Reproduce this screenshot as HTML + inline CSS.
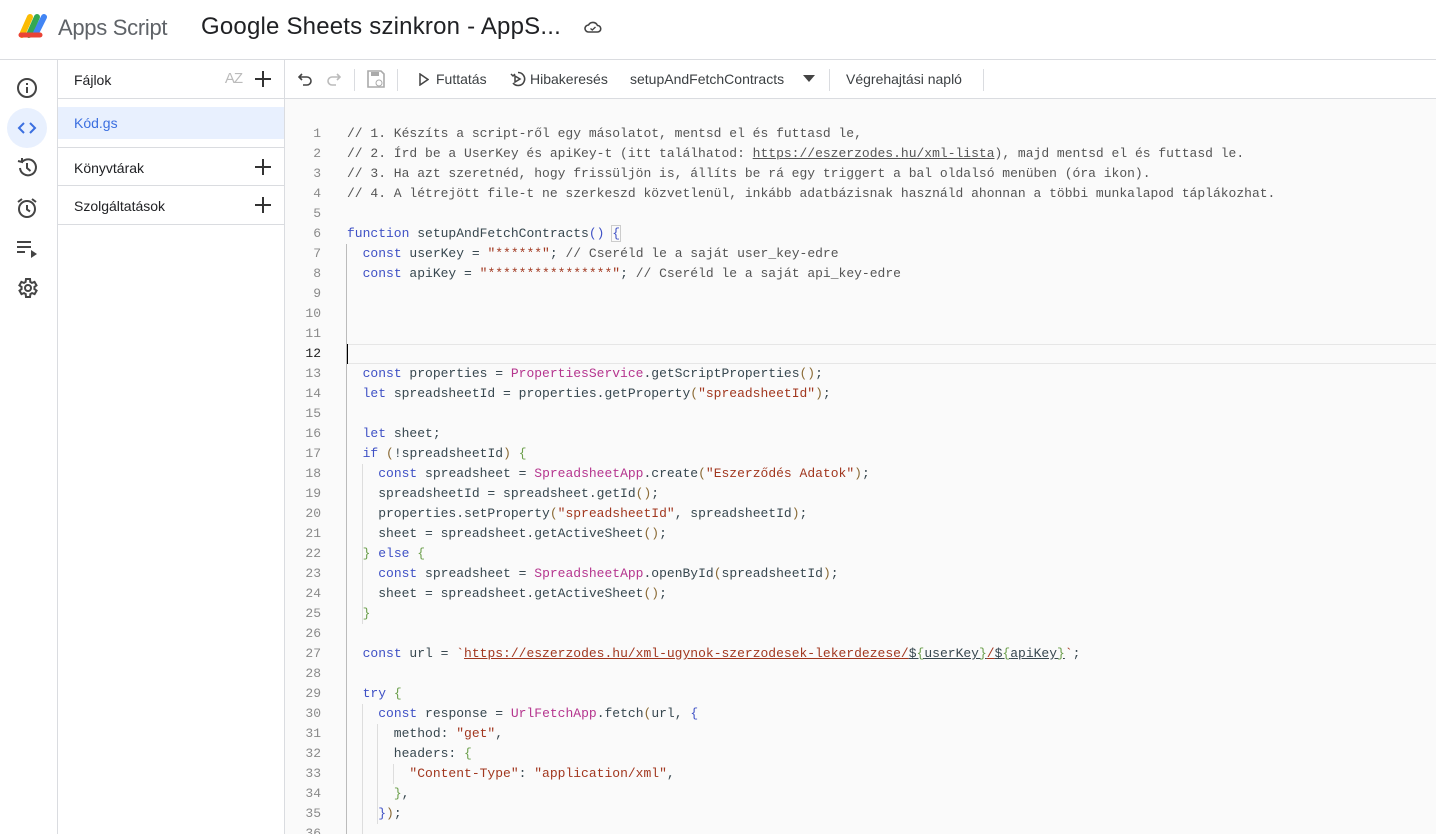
<!DOCTYPE html><html><head><meta charset="utf-8"><style>
*{box-sizing:border-box;margin:0;padding:0}
html,body{width:1436px;height:834px;overflow:hidden}
body{font-family:"Liberation Sans",sans-serif;background:#fff;color:#202124;position:relative}
.top{position:absolute;left:0;top:0;width:1436px;height:60px;border-bottom:1px solid #dadce0}
.rail{position:absolute;left:0;top:60px;width:58px;height:774px;border-right:1px solid #dadce0}
.files{position:absolute;left:58px;top:60px;width:227px;height:774px;border-right:1px solid #dadce0}
.tb{position:absolute;left:285px;top:60px;right:0;height:39px;border-bottom:1px solid #dadce0;font-size:14px;color:#3c4043}
.tb span{position:absolute;top:11px}
.ed{position:absolute;left:285px;top:99px;right:0;bottom:0;background:#fafafa;overflow:hidden}
.ln{position:absolute;left:0;width:36px;text-align:right;font:13px "Liberation Mono",monospace;color:#8a8a8a}
.cl{position:absolute;left:62px;font:13px "Liberation Mono",monospace;color:#37474f;white-space:pre}
.k{color:#3f51c5}.s{color:#a1371f}.c{color:#555}.p{color:#b5358e}.g{color:#6a9e4a}.b{color:#8b6b36}
.u{text-decoration:underline}
.frow{position:absolute;left:0;width:226px;height:39px;border-bottom:1px solid #dadce0;font-size:14px;padding:12px 16px}
.plus{position:absolute;right:12px;top:10px}
.guide{position:absolute;width:1px;background:#ddd}
</style></head><body>
<div class="top">
<svg style="position:absolute;left:18px;top:13px" width="34" height="26" viewBox="0 0 34 26"><path d="M4 22 L12 4" stroke="#fbbc04" stroke-width="6" stroke-linecap="round"/><path d="M11 22 L19 4" stroke="#34a853" stroke-width="6" stroke-linecap="round"/><path d="M18 20 L26 4" stroke="#4285f4" stroke-width="6" stroke-linecap="round"/><path d="M3 22 L22 22" stroke="#ea4335" stroke-width="5" stroke-linecap="round"/></svg>
<div style="position:absolute;left:58px;top:15px;font-size:22px;color:#5f6368;letter-spacing:-0.3px">Apps Script</div>
<div style="position:absolute;left:201px;top:13px;font-size:24px;color:#202124;letter-spacing:0.2px">Google Sheets szinkron - AppS...</div>
<svg style="position:absolute;left:584px;top:19px" width="18" height="16" viewBox="0 0 18 16"><path d="M4.5 13 A3.5 3.5 0 0 1 4.5 6 A5 5 0 0 1 13.5 6.5 A3.2 3.2 0 0 1 13.5 13 Z" fill="none" stroke="#444" stroke-width="1.6"/><path d="M6.5 9.5 L8.3 11 L11.5 8" fill="none" stroke="#444" stroke-width="1.4"/></svg>
</div>
<div class="rail">
<svg style="position:absolute;left:16px;top:17px" width="22" height="22" viewBox="0 0 22 22"><circle cx="11" cy="11" r="9" fill="none" stroke="#444" stroke-width="2"/><path d="M11 10v6M11 6v2" stroke="#444" stroke-width="2"/></svg>
<div style="position:absolute;left:7px;top:48px;width:40px;height:40px;border-radius:20px;background:#e8f0fe"></div>
<svg style="position:absolute;left:16px;top:59px" width="22" height="18" viewBox="0 0 22 18"><path d="M8 4 L3 9 L8 14 M14 4 L19 9 L14 14" fill="none" stroke="#3b6fe0" stroke-width="2"/></svg>
<svg style="position:absolute;left:16px;top:97px" width="22" height="22" viewBox="0 0 22 22"><path d="M4 11 A8 8 0 1 0 6.5 4.5" fill="none" stroke="#444" stroke-width="2"/><path d="M2 4 L6 5 L6 1" fill="none" stroke="#444" stroke-width="2"/><path d="M11 6v5l3.5 3" fill="none" stroke="#444" stroke-width="2"/></svg>
<svg style="position:absolute;left:15px;top:136px" width="24" height="24" viewBox="0 0 24 24"><circle cx="12" cy="13" r="8" fill="none" stroke="#444" stroke-width="2"/><path d="M12 9v4.5l3 2M3 6l4-3M21 6l-4-3" fill="none" stroke="#444" stroke-width="2"/></svg>
<svg style="position:absolute;left:17px;top:180px" width="22" height="18" viewBox="0 0 22 18"><path d="M0 2h14M0 7h14M0 12h8" stroke="#444" stroke-width="2"/><path d="M14 10 L20 14 L14 18Z" fill="#444"/></svg>
<svg style="position:absolute;left:15px;top:216px" width="24" height="24" viewBox="0 0 24 24"><path d="M19.4 13a7.5 7.5 0 0 0 0-2l2.1-1.6-2-3.5-2.5 1a7.5 7.5 0 0 0-1.7-1L15 3h-4l-.4 2.9a7.5 7.5 0 0 0-1.7 1l-2.5-1-2 3.5L6.6 11a7.5 7.5 0 0 0 0 2l-2.1 1.6 2 3.5 2.5-1a7.5 7.5 0 0 0 1.7 1L11 21h4l.4-2.9a7.5 7.5 0 0 0 1.7-1l2.5 1 2-3.5z" fill="none" stroke="#444" stroke-width="2"/><circle cx="13" cy="12" r="3" fill="none" stroke="#444" stroke-width="2"/></svg>
</div>
<div class="files">
<div class="frow" style="top:0">Fájlok<span style="position:absolute;right:42px;top:10px;font-size:15px;color:#bbb;letter-spacing:-1px">AZ</span><svg class="plus" width="18" height="18"><path d="M9 1v16M1 9h16" stroke="#333" stroke-width="2"/></svg></div>
<div style="position:absolute;left:0;top:47px;width:226px;height:32px;background:#e8f0fe;color:#3b6fe0;font-size:14px;padding:8px 16px">Kód.gs</div>
<div class="frow" style="top:87px;border-top:1px solid #dadce0">Könyvtárak<svg class="plus" width="18" height="18"><path d="M9 1v16M1 9h16" stroke="#333" stroke-width="2"/></svg></div>
<div class="frow" style="top:126px">Szolgáltatások<svg class="plus" width="18" height="18"><path d="M9 1v16M1 9h16" stroke="#333" stroke-width="2"/></svg></div>
</div>
<div class="tb">
<svg style="position:absolute;left:13px;top:12px" width="16" height="14" viewBox="0 0 16 14"><path d="M4 2 L1 5 L4 8 M1 5 H9 A4 4 0 0 1 9 13 H5" fill="none" stroke="#444" stroke-width="1.6"/></svg>
<svg style="position:absolute;left:40px;top:12px" width="16" height="14" viewBox="0 0 16 14"><path d="M12 2 L15 5 L12 8 M15 5 H7 A4 4 0 0 0 7 13 H11" fill="none" stroke="#bbb" stroke-width="1.6"/></svg>
<div style="position:absolute;left:69px;top:9px;width:1px;height:22px;background:#dadce0"></div>
<svg style="position:absolute;left:81px;top:9px" width="20" height="20" viewBox="0 0 20 20"><path d="M2 2h13l3 3v13H2z" fill="none" stroke="#aaa" stroke-width="1.6"/><rect x="5" y="3" width="8" height="4" fill="#aaa"/><circle cx="13" cy="14" r="3" fill="#fff" stroke="#aaa"/></svg>
<div style="position:absolute;left:112px;top:9px;width:1px;height:22px;background:#dadce0"></div>
<svg style="position:absolute;left:134px;top:13px" width="10" height="13" viewBox="0 0 10 13"><path d="M1 1 L9 6.5 L1 12Z" fill="none" stroke="#444" stroke-width="1.5"/></svg>
<span style="left:151px">Futtatás</span>
<svg style="position:absolute;left:225px;top:11px" width="16" height="16" viewBox="0 0 16 16"><path d="M8 1.5 A6.5 6.5 0 1 1 3 12" fill="none" stroke="#444" stroke-width="1.6"/><path d="M1 3l2 2 2-2M5 5l5 3-5 3z" fill="none" stroke="#444" stroke-width="1.5"/></svg>
<span style="left:245px">Hibakeresés</span>
<span style="left:345px">setupAndFetchContracts</span>
<svg style="position:absolute;left:518px;top:15px" width="12" height="8"><path d="M0 0h12L6 7z" fill="#444"/></svg>
<div style="position:absolute;left:544px;top:9px;width:1px;height:22px;background:#dadce0"></div>
<span style="left:561px">Végrehajtási napló</span>
<div style="position:absolute;left:698px;top:9px;width:1px;height:22px;background:#dadce0"></div>
</div>
<div class="ed" id="ed">
<div style="position:absolute;left:61px;top:245px;right:0;height:20px;border-top:1px solid #e6e6e6;border-bottom:1px solid #e6e6e6"></div>
<div style="position:absolute;left:61px;top:245px;width:2px;height:20px;background:#000"></div>
<div class="guide" style="left:61px;top:145px;height:700px;background:#bbb"></div>
<div class="guide" style="left:77px;top:365px;height:160px"></div>
<div class="guide" style="left:77px;top:605px;height:140px"></div>
<div class="guide" style="left:92px;top:625px;height:100px"></div>
<div class="guide" style="left:108px;top:665px;height:20px"></div>
</div>
<script>
var L=[
'<span class="c">// 1. Készíts a script-ről egy másolatot, mentsd el és futtasd le,</span>',
'<span class="c">// 2. Írd be a UserKey és apiKey-t (itt találhatod: <span class="u">https://eszerzodes.hu/xml-lista</span>), majd mentsd el és futtasd le.</span>',
'<span class="c">// 3. Ha azt szeretnéd, hogy frissüljön is, állíts be rá egy triggert a bal oldalsó menüben (óra ikon).</span>',
'<span class="c">// 4. A létrejött file-t ne szerkeszd közvetlenül, inkább adatbázisnak használd ahonnan a többi munkalapod táplákozhat.</span>',
'',
'<span class="k">function</span> setupAndFetchContracts<span class="k">()</span> <span class="k" style="outline:1px solid #ccc">{</span>',
'  <span class="k">const</span> userKey = <span class="s">"******"</span>; <span class="c">// Cseréld le a saját user_key-edre</span>',
'  <span class="k">const</span> apiKey = <span class="s">"****************"</span>; <span class="c">// Cseréld le a saját api_key-edre</span>',
'','','','',
'  <span class="k">const</span> properties = <span class="p">PropertiesService</span>.getScriptProperties<span class="b">()</span>;',
'  <span class="k">let</span> spreadsheetId = properties.getProperty<span class="b">(</span><span class="s">"spreadsheetId"</span><span class="b">)</span>;',
'',
'  <span class="k">let</span> sheet;',
'  <span class="k">if</span> <span class="b">(</span>!spreadsheetId<span class="b">)</span> <span class="g">{</span>',
'    <span class="k">const</span> spreadsheet = <span class="p">SpreadsheetApp</span>.create<span class="b">(</span><span class="s">"Eszerződés Adatok"</span><span class="b">)</span>;',
'    spreadsheetId = spreadsheet.getId<span class="b">()</span>;',
'    properties.setProperty<span class="b">(</span><span class="s">"spreadsheetId"</span>, spreadsheetId<span class="b">)</span>;',
'    sheet = spreadsheet.getActiveSheet<span class="b">()</span>;',
'  <span class="g">}</span> <span class="k">else</span> <span class="g">{</span>',
'    <span class="k">const</span> spreadsheet = <span class="p">SpreadsheetApp</span>.openById<span class="b">(</span>spreadsheetId<span class="b">)</span>;',
'    sheet = spreadsheet.getActiveSheet<span class="b">()</span>;',
'  <span class="g">}</span>',
'',
'  <span class="k">const</span> url = <span class="s">`<span class="u">https://eszerzodes.hu/xml-ugynok-szerzodesek-lekerdezese/</span></span><span class="u">$<span class="g">{</span>userKey<span class="g">}</span></span><span class="s u">/</span><span class="u">$<span class="g">{</span>apiKey<span class="g">}</span></span><span class="s">`</span>;',
'',
'  <span class="k">try</span> <span class="g">{</span>',
'    <span class="k">const</span> response = <span class="p">UrlFetchApp</span>.fetch<span class="b">(</span>url, <span class="k">{</span>',
'      method: <span class="s">"get"</span>,',
'      headers: <span class="g">{</span>',
'        <span class="s">"Content-Type"</span>: <span class="s">"application/xml"</span>,',
'      <span class="g">}</span>,',
'    <span class="k">}</span><span class="b">)</span>;',
''];
var h='';for(var i=0;i<L.length;i++){var t=25+i*20;h+='<div class="ln" style="top:'+(t+2)+'px'+(i==11?';color:#222':'')+'">'+(i+1)+'</div><div class="cl" style="top:'+(t+2)+'px">'+L[i]+'</div>';}
document.getElementById('ed').insertAdjacentHTML('beforeend',h);
</script>
</body></html>
